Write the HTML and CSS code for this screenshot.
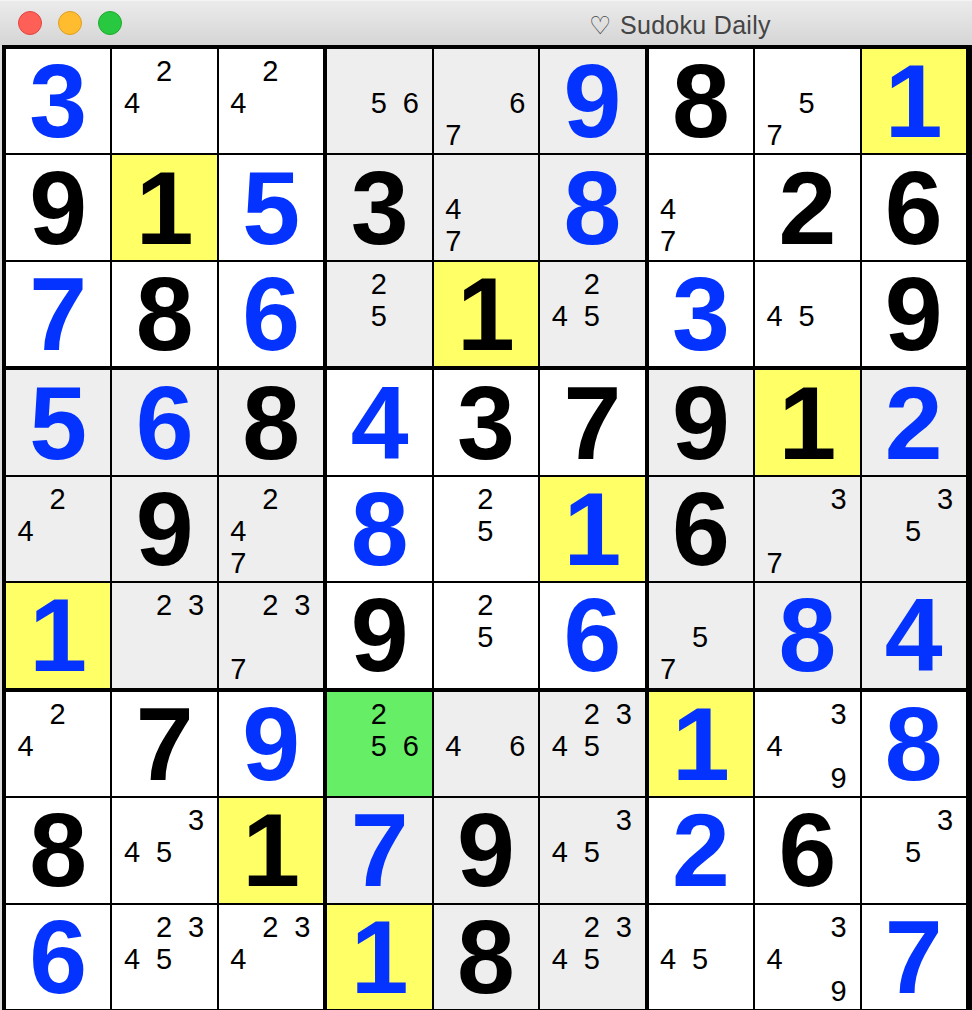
FILE: index.html
```html
<!DOCTYPE html>
<html>
<head>
<meta charset="utf-8">
<title>Sudoku Daily</title>
<link rel="stylesheet" href="styles.css">
</head>
<body>
<div class="window">
  <div class="titlebar">
    <div class="lights">
      <span class="light red"></span>
      <span class="light yellow"></span>
      <span class="light green"></span>
    </div>
    <div class="title"><span class="heart">♡</span> Sudoku Daily</div>
  </div>
  <div class="board">
    <!-- Box 1 -->
    <div class="box">
      <div class="cell"><span class="v u">3</span></div>
      <div class="cell c"><div class="cands"><i class="n2">2</i><i class="n4">4</i></div></div>
      <div class="cell c"><div class="cands"><i class="n2">2</i><i class="n4">4</i></div></div>
      <div class="cell"><span class="v">9</span></div>
      <div class="cell y"><span class="v">1</span></div>
      <div class="cell"><span class="v u">5</span></div>
      <div class="cell"><span class="v u">7</span></div>
      <div class="cell"><span class="v">8</span></div>
      <div class="cell"><span class="v u">6</span></div>
    </div>
    <!-- Box 2 -->
    <div class="box">
      <div class="cell g c"><div class="cands"><i class="n5">5</i><i class="n6">6</i></div></div>
      <div class="cell g c"><div class="cands"><i class="n6">6</i><i class="n7">7</i></div></div>
      <div class="cell g"><span class="v u">9</span></div>
      <div class="cell g"><span class="v">3</span></div>
      <div class="cell g c"><div class="cands"><i class="n4">4</i><i class="n7">7</i></div></div>
      <div class="cell g"><span class="v u">8</span></div>
      <div class="cell g c"><div class="cands"><i class="n2">2</i><i class="n5">5</i></div></div>
      <div class="cell y"><span class="v">1</span></div>
      <div class="cell g c"><div class="cands"><i class="n2">2</i><i class="n4">4</i><i class="n5">5</i></div></div>
    </div>
    <!-- Box 3 -->
    <div class="box">
      <div class="cell"><span class="v">8</span></div>
      <div class="cell c"><div class="cands"><i class="n5">5</i><i class="n7">7</i></div></div>
      <div class="cell y"><span class="v u">1</span></div>
      <div class="cell c"><div class="cands"><i class="n4">4</i><i class="n7">7</i></div></div>
      <div class="cell"><span class="v">2</span></div>
      <div class="cell"><span class="v">6</span></div>
      <div class="cell"><span class="v u">3</span></div>
      <div class="cell c"><div class="cands"><i class="n4">4</i><i class="n5">5</i></div></div>
      <div class="cell"><span class="v">9</span></div>
    </div>
    <!-- Box 4 -->
    <div class="box">
      <div class="cell g"><span class="v u">5</span></div>
      <div class="cell g"><span class="v u">6</span></div>
      <div class="cell g"><span class="v">8</span></div>
      <div class="cell g c"><div class="cands"><i class="n2">2</i><i class="n4">4</i></div></div>
      <div class="cell g"><span class="v">9</span></div>
      <div class="cell g c"><div class="cands"><i class="n2">2</i><i class="n4">4</i><i class="n7">7</i></div></div>
      <div class="cell y"><span class="v u">1</span></div>
      <div class="cell g c"><div class="cands"><i class="n2">2</i><i class="n3">3</i></div></div>
      <div class="cell g c"><div class="cands"><i class="n2">2</i><i class="n3">3</i><i class="n7">7</i></div></div>
    </div>
    <!-- Box 5 -->
    <div class="box">
      <div class="cell"><span class="v u">4</span></div>
      <div class="cell"><span class="v">3</span></div>
      <div class="cell"><span class="v">7</span></div>
      <div class="cell"><span class="v u">8</span></div>
      <div class="cell c"><div class="cands"><i class="n2">2</i><i class="n5">5</i></div></div>
      <div class="cell y"><span class="v u">1</span></div>
      <div class="cell"><span class="v">9</span></div>
      <div class="cell c"><div class="cands"><i class="n2">2</i><i class="n5">5</i></div></div>
      <div class="cell"><span class="v u">6</span></div>
    </div>
    <!-- Box 6 -->
    <div class="box">
      <div class="cell g"><span class="v">9</span></div>
      <div class="cell y"><span class="v">1</span></div>
      <div class="cell g"><span class="v u">2</span></div>
      <div class="cell g"><span class="v">6</span></div>
      <div class="cell g c"><div class="cands"><i class="n3">3</i><i class="n7">7</i></div></div>
      <div class="cell g c"><div class="cands"><i class="n3">3</i><i class="n5">5</i></div></div>
      <div class="cell g c"><div class="cands"><i class="n5">5</i><i class="n7">7</i></div></div>
      <div class="cell g"><span class="v u">8</span></div>
      <div class="cell g"><span class="v u">4</span></div>
    </div>
    <!-- Box 7 -->
    <div class="box">
      <div class="cell c"><div class="cands"><i class="n2">2</i><i class="n4">4</i></div></div>
      <div class="cell"><span class="v">7</span></div>
      <div class="cell"><span class="v u">9</span></div>
      <div class="cell"><span class="v">8</span></div>
      <div class="cell c"><div class="cands"><i class="n3">3</i><i class="n4">4</i><i class="n5">5</i></div></div>
      <div class="cell y"><span class="v">1</span></div>
      <div class="cell"><span class="v u">6</span></div>
      <div class="cell c"><div class="cands"><i class="n2">2</i><i class="n3">3</i><i class="n4">4</i><i class="n5">5</i></div></div>
      <div class="cell c"><div class="cands"><i class="n2">2</i><i class="n3">3</i><i class="n4">4</i></div></div>
    </div>
    <!-- Box 8 -->
    <div class="box">
      <div class="cell sel c"><div class="cands"><i class="n2">2</i><i class="n5">5</i><i class="n6">6</i></div></div>
      <div class="cell g c"><div class="cands"><i class="n4">4</i><i class="n6">6</i></div></div>
      <div class="cell g c"><div class="cands"><i class="n2">2</i><i class="n3">3</i><i class="n4">4</i><i class="n5">5</i></div></div>
      <div class="cell g"><span class="v u">7</span></div>
      <div class="cell g"><span class="v">9</span></div>
      <div class="cell g c"><div class="cands"><i class="n3">3</i><i class="n4">4</i><i class="n5">5</i></div></div>
      <div class="cell y"><span class="v u">1</span></div>
      <div class="cell g"><span class="v">8</span></div>
      <div class="cell g c"><div class="cands"><i class="n2">2</i><i class="n3">3</i><i class="n4">4</i><i class="n5">5</i></div></div>
    </div>
    <!-- Box 9 -->
    <div class="box">
      <div class="cell y"><span class="v u">1</span></div>
      <div class="cell c"><div class="cands"><i class="n3">3</i><i class="n4">4</i><i class="n9">9</i></div></div>
      <div class="cell"><span class="v u">8</span></div>
      <div class="cell"><span class="v u">2</span></div>
      <div class="cell"><span class="v">6</span></div>
      <div class="cell c"><div class="cands"><i class="n3">3</i><i class="n5">5</i></div></div>
      <div class="cell c"><div class="cands"><i class="n4">4</i><i class="n5">5</i></div></div>
      <div class="cell c"><div class="cands"><i class="n3">3</i><i class="n4">4</i><i class="n9">9</i></div></div>
      <div class="cell"><span class="v u">7</span></div>
    </div>
  </div>
</div>
</body>
</html>
```

FILE: styles.css
```css
* {
  box-sizing: border-box;
}

html, body {
  margin: 0;
  padding: 0;
}

body {
  width: 972px;
  height: 1010px;
  overflow: hidden;
  background: #dcdcdc;
  font-family: "Liberation Sans", Arial, sans-serif;
}

.window {
  width: 972px;
}

.titlebar {
  height: 45px;
  background: linear-gradient(#ebebeb, #d5d5d5);
  border-top: 1px solid #f4f4f4;
  display: flex;
  align-items: center;
}

.lights {
  display: flex;
  gap: 16px;
  padding-left: 18px;
}

.light {
  width: 24px;
  height: 24px;
  border-radius: 50%;
  display: block;
}

.light.red {
  background: #fe5f57;
  border: 1px solid #e2463f;
}

.light.yellow {
  background: #febc2e;
  border: 1px solid #df9e22;
}

.light.green {
  background: #28c840;
  border: 1px solid #1eac2c;
}

.title {
  margin-left: 467px;
  padding-top: 4px;
  font-size: 25px;
  letter-spacing: 0.3px;
  color: #444444;
  white-space: nowrap;
}

.heart {
  font-family: "DejaVu Sans", sans-serif;
  font-size: 25px;
  margin-right: 1px;
}

.board {
  margin-left: 2px;
  width: 970px;
  background: #000;
  padding: 4px;
  display: grid;
  grid-template-columns: repeat(3, 317.33px);
  gap: 4px;
}

.box {
  display: grid;
  grid-template-columns: repeat(3, 1fr);
  gap: 2px;
}

.cell {
  aspect-ratio: 1 / 1;
  background: #fff;
  display: flex;
  align-items: center;
  justify-content: center;
}

.cell.g {
  background: #eeeeee;
}

.cell.y {
  background: #ffff66;
}

.cell.sel {
  background: #66ee66;
}

.cell.c {
  align-items: flex-start;
  justify-content: flex-start;
  padding: 6px 0 0 3.5px;
}

.v {
  font-weight: bold;
  font-size: 104px;
  line-height: 1;
  color: #000;
}

.v.u {
  color: #0433ff;
}

.cands {
  width: 96px;
  height: 96px;
  display: grid;
  grid-template-columns: repeat(3, 32px);
  grid-template-rows: repeat(3, 32px);
  font-size: 29px;
  line-height: 32px;
  text-align: center;
  color: #000;
}

.cands i {
  font-style: normal;
}

.n1 { grid-column: 1; grid-row: 1; }
.n2 { grid-column: 2; grid-row: 1; }
.n3 { grid-column: 3; grid-row: 1; }
.n4 { grid-column: 1; grid-row: 2; }
.n5 { grid-column: 2; grid-row: 2; }
.n6 { grid-column: 3; grid-row: 2; }
.n7 { grid-column: 1; grid-row: 3; }
.n8 { grid-column: 2; grid-row: 3; }
.n9 { grid-column: 3; grid-row: 3; }
```
